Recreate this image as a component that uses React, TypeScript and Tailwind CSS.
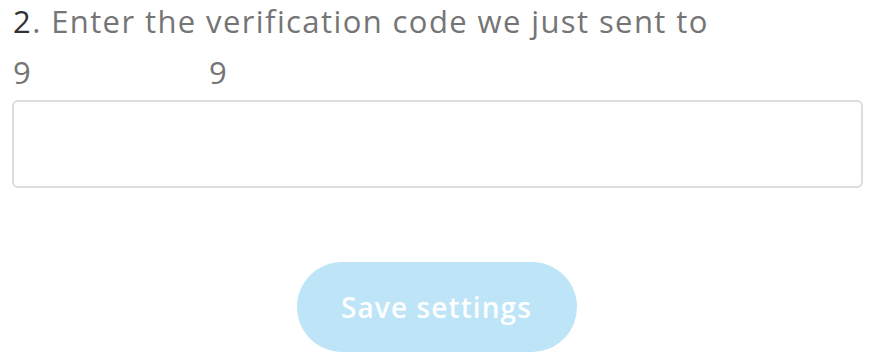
export default function App() {
  return (
    <div className="w-[873px] h-[358px] bg-white overflow-hidden" style={{ fontFamily: '"Open Sans", "Lato", sans-serif' }}>
      <div className="pl-[13px] pt-[1px] text-[31px] leading-[40px] text-[#757575] tracking-[1.4px]">
        <span className="text-[#333333]">2</span>. Enter the verification code we just sent to
      </div>
      <div className="pl-[13px] pt-[11px] flex text-[31px] leading-[40px] text-[#757575]">
        <span className="w-[196px]">9</span>
        <span>9</span>
      </div>
      <div className="ml-[12px] mt-[8px] w-[851px] h-[88px] border-2 border-[#dddddd] rounded-[6px]" />
      <div className="flex justify-center mt-[74px]">
        <button className="w-[280px] h-[90px] rounded-full bg-[#bde4f7] text-white text-[28px] font-semibold tracking-[1.1px]">
          Save settings
        </button>
      </div>
    </div>
  );
}
